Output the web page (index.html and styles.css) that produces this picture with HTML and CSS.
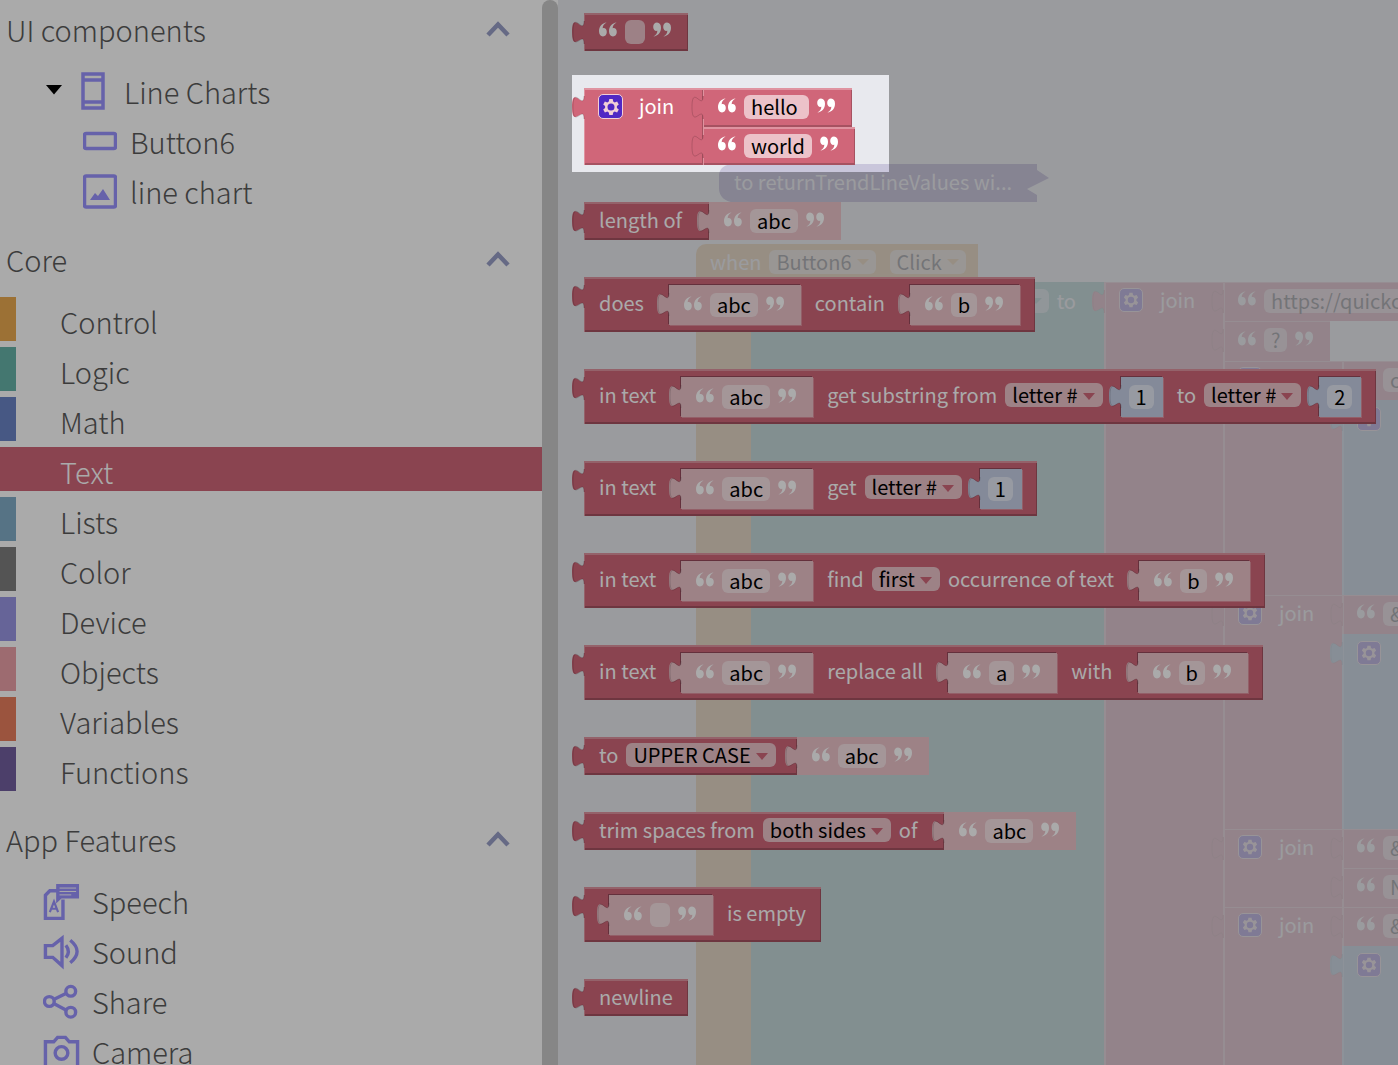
FILE: index.html
```html
<!DOCTYPE html>
<html lang="en">
<head>
<meta charset="utf-8">
<title>Blocks</title>
<link rel="stylesheet" href="styles.css">
</head>
<body>
<svg class="defs" aria-hidden="true">
  <symbol id="tab" viewBox="0 0 13 23"><path class="tab-fill" d="M13 0H12C12 15 0-12 0 11S12 8 12 23H13Z"/><path class="tab-edge" d="M12 0C12 15 1-12 1 11S12 8 12 23"/></symbol>
  <symbol id="oq" viewBox="0 0 18 15"><path fill="currentColor" d="M7.600 .5C4.500 2 3.600 4.500 3.700 6.200C6 5.600 7.800 7.300 7.800 10C7.800 12.600 6.200 14.400 4 14.400C1.500 14.400 0 12.300 0 9.200C0 4.500 3 1 7.600 .5ZM17.600 .5C14.500 2 13.600 4.500 13.700 6.200C16 5.600 17.800 7.300 17.800 10C17.800 12.600 16.200 14.400 14 14.400C11.500 14.400 10 12.300 10 9.200C10 4.500 13 1 17.600 .5Z"/></symbol>
  <symbol id="cq" viewBox="0 0 18 15"><g transform="rotate(180 9 7.500)"><use href="#oq" width="18" height="15"/></g></symbol>
  <symbol id="gear" viewBox="0 0 24 24"><path fill="currentColor" fill-rule="evenodd" d="M10.300 4h3.400l.5 2.500 1.500.9 2.400-.9 1.700 2.900-1.900 1.700v1.800l1.900 1.700-1.700 2.900-2.400-.9-1.500.9-.5 2.500h-3.400l-.5-2.500-1.500-.9-2.400.9-1.700-2.900 1.900-1.700v-1.800L4.200 9.400l1.700-2.900 2.400.9 1.500-.9ZM12 8.500a3.500 3.500 0 1 0 0 7a3.500 3.500 0 1 0 0-7Z"/></symbol>
  <symbol id="chev" viewBox="0 0 24 18"><path d="M2 15L12 4.500L22 15" fill="none" stroke="currentColor" stroke-width="4.500"/></symbol>
</svg>

<div class="app">
  <nav class="sidebar" aria-label="Block categories">
    <section>
      <h2><button type="button" aria-expanded="true">UI components<svg class="chev"><use href="#chev"/></svg></button></h2>
      <ul>
        <li><a href="#screen" class="comp screen"><svg class="caret" viewBox="0 0 16 10"><path d="M0 0H16L8 9.500Z"/></svg><svg class="ic-screen" viewBox="0 0 24 38"><path d="M2 2H22V36H2ZM2 8H22M2 30H22"/></svg>Line Charts</a></li>
        <li><a href="#button6" class="comp"><svg class="ic" viewBox="0 0 34 38"><rect x="1.500" y="11.500" width="31" height="15" rx="1.500"/></svg>Button6</a></li>
        <li><a href="#chart" class="comp"><svg class="ic" viewBox="0 0 34 38"><rect x="1.500" y="4" width="31" height="31" rx="1.500"/><path class="solid" d="M7 28L12 21L15 24L20 17L27 28Z"/></svg>line chart</a></li>
      </ul>
    </section>
    <section>
      <h2><button type="button" aria-expanded="true">Core<svg class="chev"><use href="#chev"/></svg></button></h2>
      <ul>
        <li><a href="#control" class="cat control">Control</a></li>
        <li><a href="#logic" class="cat logic">Logic</a></li>
        <li><a href="#math" class="cat math">Math</a></li>
        <li><a href="#text" class="cat text" aria-current="true">Text</a></li>
        <li><a href="#lists" class="cat lists">Lists</a></li>
        <li><a href="#color" class="cat color">Color</a></li>
        <li><a href="#device" class="cat device">Device</a></li>
        <li><a href="#objects" class="cat objects">Objects</a></li>
        <li><a href="#variables" class="cat variables">Variables</a></li>
        <li><a href="#functions" class="cat functions">Functions</a></li>
      </ul>
    </section>
    <section>
      <h2><button type="button" aria-expanded="true">App Features<svg class="chev"><use href="#chev"/></svg></button></h2>
      <ul>
        <li><a href="#speech" class="feat"><svg class="ic-feat" viewBox="0 0 38 38"><path d="M15 8H7L2.500 12.500V36.500H20.500V17"/><path d="M7 30L11.300 19L15.500 30M8.500 26.500H14" stroke-width="2.200"/><path class="solid" d="M13.500 1H37V16H19L13.500 21Z"/><path class="gap" d="M17 5.200H34M17 8.700H34M17 12.200H29"/></svg>Speech</a></li>
        <li><a href="#sound" class="feat"><svg class="ic-feat" viewBox="0 0 38 38"><path d="M2.500 13V25H10L19.500 33.500V5.500L10 13Z"/><path d="M23.500 12.500Q28.500 19 23.500 25.500M28 7.500Q42 19 28 30.500"/></svg>Sound</a></li>
        <li><a href="#share" class="feat"><svg class="ic-feat" viewBox="0 0 38 38"><circle cx="6.500" cy="19" r="5"/><circle cx="28.500" cy="8.500" r="5"/><circle cx="28.500" cy="30" r="5"/><path d="M11 17L24 10.500M11 21L24 28"/></svg>Share</a></li>
        <li><a href="#camera" class="feat"><svg class="ic-feat" viewBox="0 0 38 38"><path d="M2.500 9H11L15 4.500H23L27 9H35.500V36H2.500Z"/><circle cx="19" cy="20.500" r="6.500"/></svg>Camera</a></li>
      </ul>
    </section>
  </nav>
  <div class="scrollbar"></div>

  <main class="workspace">
    <div class="canvas" aria-hidden="true">
      <div class="collapsed"><svg viewBox="0 0 330 38" preserveAspectRatio="none"><path d="M12 0H318V6L330 14L308 25L318 31V38H12Q0 35 0 24V12Q0 2 12 0Z"/></svg><span>to returnTrendLineValues wi...</span></div>
      <div class="event">
        <div class="event-head">when <span class="chip">Button6<i></i></span> <span class="chip">Click<i></i></span></div>
        <div class="event-body">
          <div class="setter"><span class="chip setter-chip">Text<i></i></span> to</div>
          <div class="ws-join first"><svg class="tab"><use href="#tab"/></svg><svg class="gear"><use href="#gear"/></svg>join</div>
          <div class="ws-rows">
            <div class="ws-text"><svg class="tab"><use href="#tab"/></svg><svg class="q"><use href="#oq"/></svg><span class="chip">https://quickchart.io/chart</span></div>
            <div class="ws-text short"><svg class="tab"><use href="#tab"/></svg><svg class="q"><use href="#oq"/></svg><span class="chip">?</span><svg class="q"><use href="#cq"/></svg></div>
            <div class="ws-pair tall">
              <div class="ws-join"><svg class="tab"><use href="#tab"/></svg><svg class="gear"><use href="#gear"/></svg>join</div>
              <div class="ws-rows"><div class="ws-text"><svg class="q"><use href="#oq"/></svg><span class="chip">c=</span></div><div class="ws-list"><svg class="tab"><use href="#tab"/></svg><svg class="gear"><use href="#gear"/></svg></div></div>
            </div>
            <div class="ws-pair tall">
              <div class="ws-join"><svg class="tab"><use href="#tab"/></svg><svg class="gear"><use href="#gear"/></svg>join</div>
              <div class="ws-rows"><div class="ws-text"><svg class="tab"><use href="#tab"/></svg><svg class="q"><use href="#oq"/></svg><span class="chip">&amp;d=</span></div><div class="ws-list"><svg class="tab"><use href="#tab"/></svg><svg class="gear"><use href="#gear"/></svg></div></div>
            </div>
            <div class="ws-pair">
              <div class="ws-join"><svg class="tab"><use href="#tab"/></svg><svg class="gear"><use href="#gear"/></svg>join</div>
              <div class="ws-rows"><div class="ws-text"><svg class="tab"><use href="#tab"/></svg><svg class="q"><use href="#oq"/></svg><span class="chip">&amp;l=</span></div><div class="ws-text"><svg class="tab"><use href="#tab"/></svg><svg class="q"><use href="#oq"/></svg><span class="chip">Name</span></div></div>
            </div>
            <div class="ws-pair tall">
              <div class="ws-join"><svg class="tab"><use href="#tab"/></svg><svg class="gear"><use href="#gear"/></svg>join</div>
              <div class="ws-rows"><div class="ws-text"><svg class="tab"><use href="#tab"/></svg><svg class="q"><use href="#oq"/></svg><span class="chip">&amp;x=</span></div><div class="ws-list"><svg class="tab"><use href="#tab"/></svg><svg class="gear"><use href="#gear"/></svg></div></div>
            </div>
          </div>
        </div>
      </div>
    </div>

    <div class="flyout">
      <div class="line"><div class="block quote"><svg class="tab"><use href="#tab"/></svg><svg class="q"><use href="#oq"/></svg><input class="blank" aria-label="Text" value=""><svg class="q"><use href="#cq"/></svg></div></div>

      <div class="line">
        <div class="block join"><svg class="tab"><use href="#tab"/></svg><button type="button" class="gear-btn" aria-label="Edit join"><svg class="gear"><use href="#gear"/></svg></button><span>join</span></div>
        <div class="stack">
          <div class="block quote"><svg class="tab"><use href="#tab"/></svg><svg class="q"><use href="#oq"/></svg><input class="word" aria-label="First text" value="hello"><svg class="q"><use href="#cq"/></svg></div>
          <div class="block quote"><svg class="tab"><use href="#tab"/></svg><svg class="q"><use href="#oq"/></svg><input class="word" aria-label="Second text" value="world"><svg class="q"><use href="#cq"/></svg></div>
        </div>
      </div>

      <div class="line">
        <div class="block outer"><svg class="tab"><use href="#tab"/></svg><span>length of</span></div>
        <div class="quote shadow"><svg class="tab"><use href="#tab"/></svg><svg class="q"><use href="#oq"/></svg><input aria-label="Text to measure" value="abc"><svg class="q"><use href="#cq"/></svg></div>
      </div>

      <div class="line"><div class="block inline"><svg class="tab"><use href="#tab"/></svg><span>does</span>
        <div class="quote shadow"><svg class="tab"><use href="#tab"/></svg><svg class="q"><use href="#oq"/></svg><input aria-label="Text" value="abc"><svg class="q"><use href="#cq"/></svg></div>
        <span>contain</span>
        <div class="quote shadow"><svg class="tab"><use href="#tab"/></svg><svg class="q"><use href="#oq"/></svg><input aria-label="Piece" value="b"><svg class="q"><use href="#cq"/></svg></div>
      </div></div>

      <div class="line"><div class="block inline"><svg class="tab"><use href="#tab"/></svg><span>in text</span>
        <div class="quote shadow"><svg class="tab"><use href="#tab"/></svg><svg class="q"><use href="#oq"/></svg><input aria-label="Text" value="abc"><svg class="q"><use href="#cq"/></svg></div>
        <span>get substring from</span>
        <div class="drop"><select aria-label="From"><option>letter #</option></select></div>
        <div class="number shadow"><svg class="tab"><use href="#tab"/></svg><input aria-label="Start" value="1"></div>
        <span>to</span>
        <div class="drop"><select aria-label="To"><option>letter #</option></select></div>
        <div class="number shadow"><svg class="tab"><use href="#tab"/></svg><input aria-label="End" value="2"></div>
      </div></div>

      <div class="line"><div class="block inline"><svg class="tab"><use href="#tab"/></svg><span>in text</span>
        <div class="quote shadow"><svg class="tab"><use href="#tab"/></svg><svg class="q"><use href="#oq"/></svg><input aria-label="Text" value="abc"><svg class="q"><use href="#cq"/></svg></div>
        <span>get</span>
        <div class="drop"><select aria-label="Letter position"><option>letter #</option></select></div>
        <div class="number shadow"><svg class="tab"><use href="#tab"/></svg><input aria-label="Position" value="1"></div>
      </div></div>

      <div class="line"><div class="block inline"><svg class="tab"><use href="#tab"/></svg><span>in text</span>
        <div class="quote shadow"><svg class="tab"><use href="#tab"/></svg><svg class="q"><use href="#oq"/></svg><input aria-label="Text" value="abc"><svg class="q"><use href="#cq"/></svg></div>
        <span>find</span>
        <div class="drop"><select aria-label="Occurrence"><option>first</option></select></div>
        <span class="follow">occurrence of text</span>
        <div class="quote shadow"><svg class="tab"><use href="#tab"/></svg><svg class="q"><use href="#oq"/></svg><input aria-label="Text to find" value="b"><svg class="q"><use href="#cq"/></svg></div>
      </div></div>

      <div class="line"><div class="block inline"><svg class="tab"><use href="#tab"/></svg><span>in text</span>
        <div class="quote shadow"><svg class="tab"><use href="#tab"/></svg><svg class="q"><use href="#oq"/></svg><input aria-label="Text" value="abc"><svg class="q"><use href="#cq"/></svg></div>
        <span>replace all</span>
        <div class="quote shadow"><svg class="tab"><use href="#tab"/></svg><svg class="q"><use href="#oq"/></svg><input aria-label="Text to replace" value="a"><svg class="q"><use href="#cq"/></svg></div>
        <span>with</span>
        <div class="quote shadow"><svg class="tab"><use href="#tab"/></svg><svg class="q"><use href="#oq"/></svg><input aria-label="Replacement" value="b"><svg class="q"><use href="#cq"/></svg></div>
      </div></div>

      <div class="line">
        <div class="block outer ends-drop"><svg class="tab"><use href="#tab"/></svg><span>to</span><div class="drop"><select aria-label="Case"><option>UPPER CASE</option></select></div></div>
        <div class="quote shadow"><svg class="tab"><use href="#tab"/></svg><svg class="q"><use href="#oq"/></svg><input aria-label="Text to convert" value="abc"><svg class="q"><use href="#cq"/></svg></div>
      </div>

      <div class="line">
        <div class="block outer"><svg class="tab"><use href="#tab"/></svg><span>trim spaces from</span><div class="drop"><select aria-label="Sides"><option>both sides</option></select></div><span class="follow">of</span></div>
        <div class="quote shadow"><svg class="tab"><use href="#tab"/></svg><svg class="q"><use href="#oq"/></svg><input aria-label="Text to trim" value="abc"><svg class="q"><use href="#cq"/></svg></div>
      </div>

      <div class="line"><div class="block inline"><svg class="tab"><use href="#tab"/></svg>
        <div class="quote shadow"><svg class="tab"><use href="#tab"/></svg><svg class="q"><use href="#oq"/></svg><input class="blank" aria-label="Text to check" value=""><svg class="q"><use href="#cq"/></svg></div>
        <span>is empty</span>
      </div></div>

      <div class="line"><div class="block plain"><svg class="tab"><use href="#tab"/></svg><span>newline</span></div></div>
    </div>
  </main>
</div>
<div class="spotlight"></div>
</body>
</html>
```
FILE: styles.css
```css
:root {
  --text: #d06679;
  --math: #6b85c6;
  --lists: #82adc8;
  --logic: #66b3a6;
  --control: #e9ab50;
}
* { box-sizing: border-box; }
body {
  margin: 0;
  height: 100vh;
  overflow: hidden;
  position: relative;
  font-family: "Source Sans Pro", "Noto Sans CJK SC", sans-serif;
  font-size: 20px;
  line-height: 24px;
  background: #fff;
}
.defs { position: absolute; width: 0; height: 0; }
.app { display: flex; height: 100%; }

/* Category tree */
.sidebar {
  flex: 0 0 542px;
  overflow: hidden;
  display: flex;
  flex-direction: column;
  gap: 13px;
  color: #5a5a5a;
  font-size: 29px;
  font-weight: 300;
}
.sidebar section { flex: none; }
h2 { margin: 0 0 7px; font: inherit; }
h2 button {
  display: flex;
  align-items: center;
  justify-content: space-between;
  width: 100%;
  height: 60px;
  padding: 0 32px 2px 6px;
  border: 0;
  background: none;
  color: inherit;
  font: inherit;
}
.chev { width: 24px; height: 18px; color: #999fc8; }
ul { list-style: none; margin: 0; padding: 0; }
li { height: 44px; margin-bottom: 6px; }
li a {
  display: flex;
  align-items: center;
  height: 44px;
  padding-top: 4px;
  color: inherit;
  text-decoration: none;
}
.cat { padding-left: 44px; border-left: 16px solid var(--c); }
.control { --c: #eaaa50; }
.logic { --c: #66b3a8; }
.math { --c: #6b85c6; }
.text { --c: #d06679; }
.lists { --c: #82adc8; }
.color { --c: #7f7f7f; }
.device { --c: #9996e4; }
.objects { --c: #eca1a8; }
.variables { --c: #e97f5d; }
.functions { --c: #725f9f; }
.cat[aria-current] { background: var(--c); color: #fff; }
.comp { padding-left: 83px; gap: 13px; }
.comp.screen { padding-left: 46px; gap: 19px; }
.feat { padding-left: 43px; gap: 12px; }
.sidebar a svg { fill: none; stroke: #9a93ff; stroke-width: 3.5; flex: none; }
.sidebar a .solid { fill: #9a93ff; stroke: none; }
.sidebar a .gap { stroke: #fff; stroke-width: 1; }
.sidebar a .caret { width: 16px; height: 10px; fill: #000; stroke: none; margin-bottom: 2px; }
.ic-screen { width: 24px; height: 38px; }
.ic { width: 34px; height: 38px; }
.ic-feat { width: 37px; height: 37px; }
.scrollbar { flex: 0 0 16px; background: #c9c9c9; border-radius: 8px 8px 0 0; }

/* Shared block parts */
.tab {
  position: absolute;
  left: -12px;
  top: 8px;
  width: 13px;
  height: 23px;
  overflow: visible;
}
.tab-fill { fill: var(--c); }
.tab-edge { fill: none; stroke: #000; stroke-opacity: .15; stroke-width: 1; }
.q { width: 18px; height: 15px; flex: none; color: #fff; margin-bottom: 4px; }
.gear { width: 24px; height: 24px; }

/* Workspace below the flyout */
.workspace { flex: 1; position: relative; overflow: hidden; }
.canvas { position: absolute; inset: 0; color: #fff; }
.collapsed {
  position: absolute;
  left: 161px;
  top: 164px;
  width: 330px;
  height: 38px;
  padding: 6px 15px;
}
.collapsed svg { position: absolute; inset: 0; width: 100%; height: 100%; fill: #7a68ae; }
.collapsed span { position: relative; }
.event { position: absolute; left: 138px; top: 244px; width: 1100px; }
.event-head {
  display: flex;
  align-items: center;
  gap: 8px;
  width: 282px;
  height: 38px;
  padding: 0 0 3px 14px;
  background: var(--control);
  border-radius: 10px 0 0 0;
}
.event-head .chip + .chip { margin-left: 6px; }
.chip {
  display: flex;
  align-items: center;
  gap: 5px;
  height: 24px;
  padding: 0 7px;
  border-radius: 6px;
  background: rgba(255, 255, 255, .6);
  color: #000;
  white-space: nowrap;
}
.chip i { border: 6px solid transparent; border-top-color: var(--control); border-bottom: 0; }
.event-body {
  display: flex;
  height: 900px;
  border-left: 55px solid var(--control);
  background: linear-gradient(to right, var(--logic) 353px, transparent 353px);
}
.setter {
  flex: 0 0 353px;
  display: flex;
  align-items: center;
  justify-content: flex-end;
  gap: 8px;
  height: 38px;
  padding-right: 28px;
}
.setter-chip i { border-top-color: var(--logic); }
.ws-join {
  --c: var(--text);
  position: relative;
  flex: 0 0 119px;
  padding: 6px 0 0 15px;
  display: flex;
  align-items: flex-start;
  gap: 17px;
  background: var(--text);
  box-shadow: inset 2px 1px #e3a3ae;
}
.ws-join .gear, .ws-list .gear, .gear-btn {
  background: #5028c4;
  color: #f3cfd6;
  border: 1px solid #f3cfd6;
  border-radius: 5px;
}
.ws-rows { flex: 1; }
.ws-text {
  --c: var(--text);
  position: relative;
  display: flex;
  align-items: center;
  gap: 8px;
  height: 39px;
  padding: 0 15px 2px;
  background: var(--text);
  box-shadow: inset 2px 1px #e3a3ae;
}
.ws-text.short { width: 107px; height: 40px; }
.ws-list { --c: var(--lists); position: relative; flex: 1; padding: 7px 15px; background: var(--lists); box-shadow: inset 2px 0 #a9c8db; }
.ws-pair { display: flex; height: 78px; }
.ws-pair.tall { height: 234px; }
.ws-pair .ws-rows { display: flex; flex-direction: column; }

/* Flyout */
.flyout {
  position: relative;
  min-height: 100%;
  padding: 13px 0 0 26px;
  display: flex;
  flex-direction: column;
  gap: 37px;
  background: rgba(225, 226, 233, .77);
}
.line { display: flex; align-items: flex-start; flex: none; }
.block {
  --c: var(--text);
  position: relative;
  display: flex;
  align-items: center;
  height: 38px;
  padding: 0 15px;
  background: var(--c);
  color: #fff;
  box-shadow: inset 1px 2px #df93a0, inset -1px -2px #a65261;
  white-space: nowrap;
}
.block > span, .block > .drop { margin-bottom: 2px; }
.block.inline { height: 55px; }
.block.inline > span, .block.inline > .drop { margin-bottom: 3px; }
.block.plain { height: 37px; }
.block.join { height: 77px; width: 119px; align-items: flex-start; padding: 6px 14px; gap: 16px; }
.block.outer { padding-right: 27px; }
.block.ends-drop { padding-right: 21px; }
.stack { display: flex; flex-direction: column; align-items: flex-start; }
.stack .block { height: 39px; }
.stack .block + .block { height: 38px; }
.quote, .block.quote { display: flex; align-items: center; gap: 8px; padding: 0 17px 0 15px; }
.block.quote { padding-bottom: 1px; }
.shadow {
  --c: #ecc3ca;
  position: relative;
  height: 38px;
  background: var(--c);
}
.inline .shadow {
  height: 40px;
  margin: 1px 14px 0 25px;
  box-shadow: -1px -1px #97495a, 1px 1px #dd8f9c;
}
.inline .shadow:last-child { margin-right: 0; }
.inline > .tab + .shadow { margin-left: 10px; }
.inline .drop + .shadow { margin-left: 18px; }
.number.shadow { --c: #c6cfe6; display: flex; align-items: center; padding: 0 9px 0 8px; }
.block input, .shadow input {
  field-sizing: content;
  height: 24px;
  padding: 0 7px;
  border: 0;
  border-radius: 6px;
  background: rgba(255, 255, 255, .6);
  color: #000;
  font: inherit;
  line-height: 24px;
}
.shadow input { background: rgba(255, 255, 255, .5); }
.block input.blank { width: 20px; padding: 0; }
.block input.word { min-width: 65px; }
.gear-btn { display: flex; width: 25px; height: 25px; padding: 0; flex: none; align-items: center; justify-content: center; }
.gear-btn .gear { flex: none; }
.drop { position: relative; display: flex; margin-left: 8px; }
.drop select {
  appearance: none;
  field-sizing: content;
  height: 24px;
  padding: 0 25px 0 7px;
  border: 0;
  border-radius: 6px;
  background: #ecc3ca;
  color: #000;
  font: inherit;
  line-height: 24px;
}
.drop::after {
  content: "";
  position: absolute;
  right: 8px;
  top: 10px;
  border: 6px solid transparent;
  border-top: 7px solid var(--text);
  border-bottom: 0;
  pointer-events: none;
}
.follow { margin-left: 8px; }

/* Dims everything but the highlighted block */
.spotlight {
  position: absolute;
  left: 572px;
  top: 75px;
  width: 317px;
  height: 97px;
  box-shadow: 0 0 0 2000px rgba(0, 0, 0, .333);
  pointer-events: none;
}
```
